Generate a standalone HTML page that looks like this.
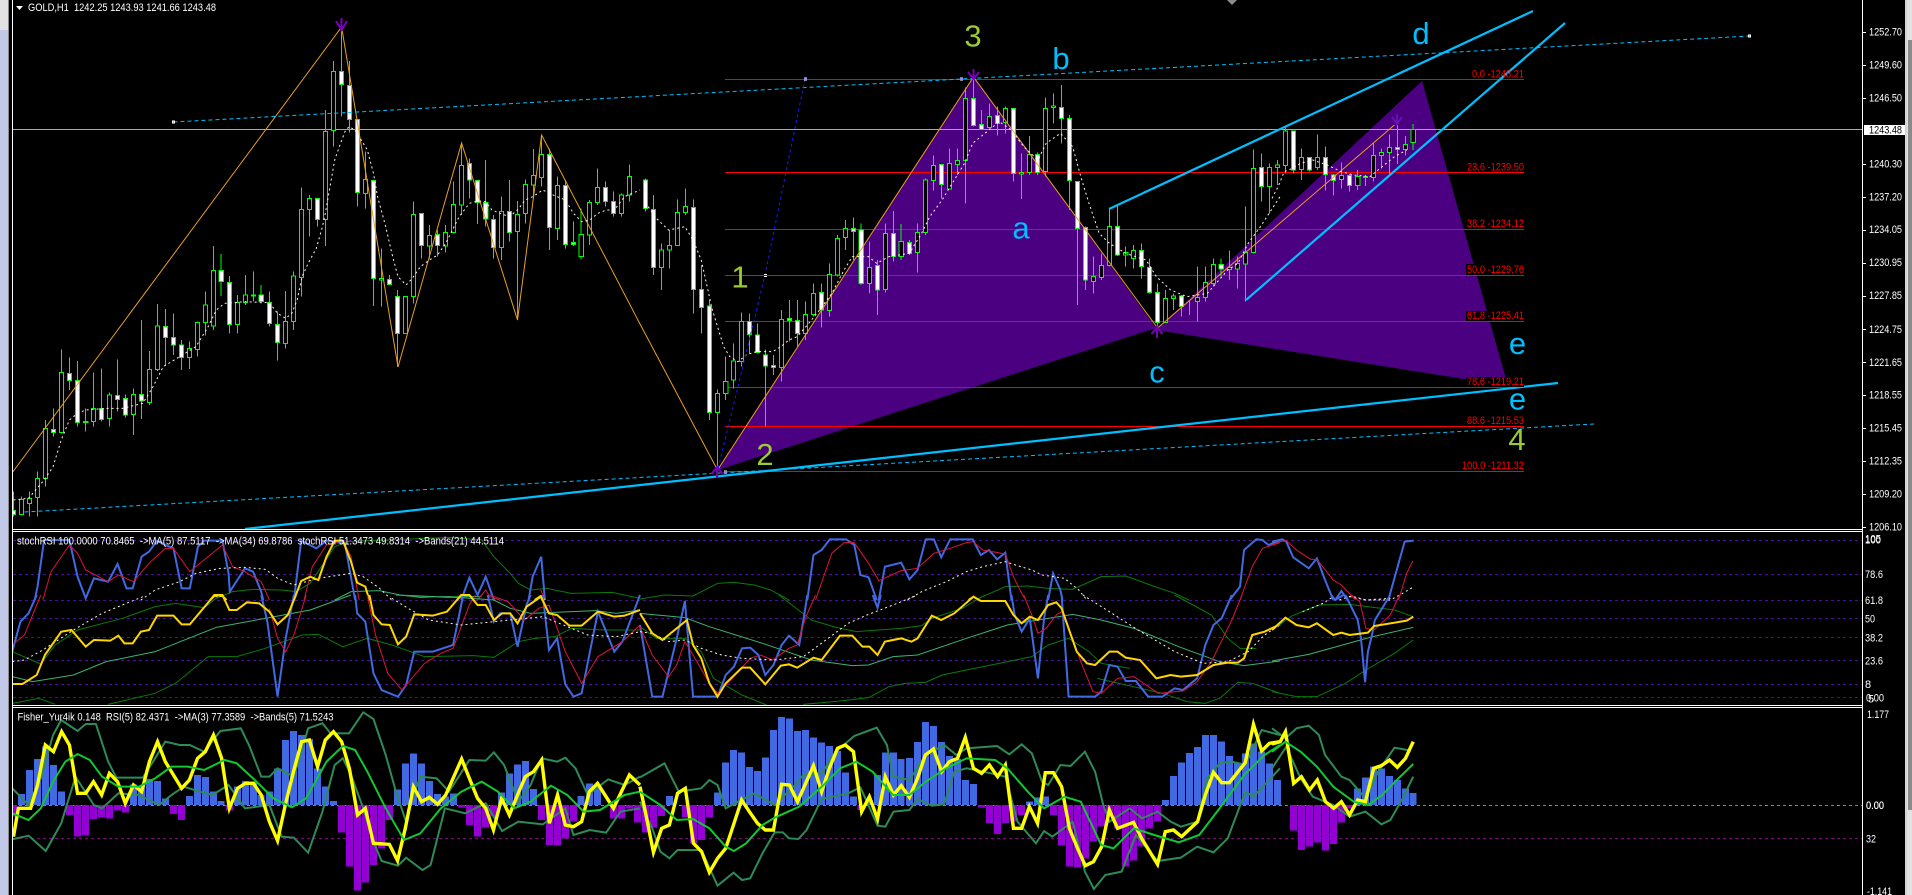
<!DOCTYPE html>
<html><head><meta charset="utf-8"><title>GOLD,H1</title>
<style>
html,body{margin:0;padding:0;background:#000;width:1912px;height:895px;overflow:hidden}
svg{display:block}
path{vector-effect:non-scaling-stroke}
text{font-family:"Liberation Sans",Arial,sans-serif;font-size:11px;fill:#fff}
.w{stroke:#0f0;stroke-width:1;shape-rendering:crispEdges}
.u{stroke:#0f0;stroke-width:1;fill:#000;shape-rendering:crispEdges}
.d{stroke:#0f0;stroke-width:1;fill:#fff;shape-rendering:crispEdges}
.m{stroke:#fff8e8;stroke-width:1;stroke-dasharray:2 3}
.o{stroke:#e8a020;stroke-width:1}
.bl{stroke:#4169e1;stroke-width:2}
.rd{stroke:#dc143c;stroke-width:1}
.dg{stroke:#0a7a0a;stroke-width:1}
.mg{stroke:#3cb371;stroke-width:1}
.yw{stroke:#ffd700;stroke-width:2}
.ub{stroke:#4169e1;stroke-width:7;shape-rendering:crispEdges}
.db{stroke:#9400d3;stroke-width:7;shape-rendering:crispEdges}
.sg{stroke:#2e8b57;stroke-width:2}
.yy{stroke:#ffff00;stroke-width:3.4}
.lg{stroke:#10c830;stroke-width:2}
text.big{font-size:31px}
text.cy{fill:#00bfff}
text.yg{fill:#9acd32}
text.rt{fill:#f00}
</style></head><body>
<svg width="1912" height="895" viewBox="0 0 1912 895" fill="none" xmlns="http://www.w3.org/2000/svg">
<rect width="1912" height="895" fill="#000"/>

<!-- purple harmonic polygons -->
<path fill="#4b0082" d="M718 470L973.5 76L1156 328Z"/>
<path fill="#4b0082" d="M1156 330L1422 81L1508 386Z"/>

<!-- fib lines -->
<g stroke="#f00" stroke-width="1" shape-rendering="crispEdges">
<path d="M725 79.5H1524M725 172.5H1524M725 229.5H1524M725 275.5H1524M725 321.5H1524M725 387.5H1524M725 426.5H1524M725 471.5H1524"/>
</g>

<!-- current price line -->
<path d="M12 129.5H1863" stroke="#a8a8a8" stroke-width="1" shape-rendering="crispEdges"/>

<!-- candles crop 1 -->
<g transform="scale(.40816 .33333)">
<path class="w" d="M503 875V1007M523 738V990M542 762V888M562 828V1000M582 885V1000M601 825V915M621 815V905M640 855V910M660 875V980M699 873V1045M719 815V990M739 562V890M758 585V710M778 595V680M797 330V738M817 183V440M837 70V350M856 183V398M876 358V620M895 455V625M915 540V918M935 745V920M954 825V855M974 870V1100M1013 605V910M1033 640V775M1052 675V775M1072 690V770M1091 675V757M1111 545V700M1131 430V645M1150 475V595M1170 540V672M1190 480V680M1209 645V775M1229 590V780M1248 540V725M1268 603V960M1287 538V670M1307 447V590M1327 405V560M1346 445V750M1366 530V720M1385 540V745M1405 665V738M1424 625V778M1444 600V735M1464 505V615M1483 545V620M1503 575V650M1523 580V650M1542 493V605"/>
<path class="u" d="M518 812h10V978h-10zM596 885h10V908h-10zM714 828h10V965h-10zM734 628h10V832h-10zM753 595h10V628h-10zM792 394h10V658h-10zM812 214h10V391h-10zM890 538h10V580h-10zM988 890h10V1000h-10zM1008 643h10V890h-10zM1047 707h10V738h-10zM1086 697h10V738h-10zM1106 613h10V697h-10zM1126 496h10V615h-10zM1224 634h10V742h-10zM1263 643h10V695h-10zM1282 553h10V640h-10zM1302 526h10V555h-10zM1322 463h10V532h-10zM1361 557h10V685h-10zM1419 703h10V770h-10zM1439 607h10V705h-10zM1459 562h10V607h-10zM1518 585h10V640h-10zM1537 529h10V585h-10zM930 835h10V840h-10zM616 885h10V888h-10z"/>
<path class="d" d="M537 812h10V845h-10zM557 848h10V973h-10zM635 885h10V905h-10zM773 595h10V658h-10zM832 214h10V253h-10zM851 257h10V358h-10zM871 358h10V577h-10zM910 541h10V835h-10zM949 838h10V853h-10zM969 890h10V1000h-10zM1028 640h10V737h-10zM1067 703h10V737h-10zM1145 490h10V540h-10zM1165 542h10V607h-10zM1185 607h10V657h-10zM1204 658h10V742h-10zM1243 635h10V697h-10zM1341 463h10V682h-10zM1380 557h10V733h-10zM1400 727h10V733h-10zM1478 562h10V605h-10zM1498 604h10V640h-10z"/>
</g>
<!-- candles crop 4 -->
<g transform="translate(0 300) scale(.40816 .33333)">
<path class="w" d="M33 575V650M53 590V645M72 575V650M92 515V650M111 360V560M131 325V410M151 148V400M170 172V270M190 183V380M210 325V395M229 217V380M249 205V365M268 278V380M288 178V335M307 283V352M327 265V405M347 60V357M366 153V315M386 12V213M405 27V197M425 40V165M445 120V210M464 125V207M484 65V170M680 35V182"/>
<path class="u" d="M48 598h10V643h-10zM67 595h10V610h-10zM87 535h10V592h-10zM106 385h10V535h-10zM146 217h10V397h-10zM224 325h10V365h-10zM263 285h10V355h-10zM322 283h10V343h-10zM361 208h10V307h-10zM381 78h10V208h-10zM459 145h10V172h-10zM479 67h10V148h-10zM498 15h10V67h-10zM577 8h10V73h-10zM694 65h10V130h-10zM205 364h10V368h-10z"/>
<path class="d" d="M28 632h10V643h-10zM126 388h10V397h-10zM165 221h10V241h-10zM185 241h10V367h-10zM244 325h10V358h-10zM283 287h10V298h-10zM302 295h10V345h-10zM342 283h10V303h-10zM400 79h10V112h-10zM420 112h10V135h-10zM440 135h10V172h-10zM655 8h10V70h-10zM675 73h10V128h-10z"/>
</g>
<!-- candles crop 2 -->
<g transform="translate(640 0) scale(.40816 .33333)">
<path class="w" d="M13 535V635M33 585V825M53 730V870M72 690V805M92 598V738M111 565V645M131 598V940M151 795V1000M170 900V1260M190 1168V1410M210 1070V1200M229 1030V1165M249 938V1100M268 940V1060M288 970V1060M307 1048V1280M327 1065V1125M347 930V1145M366 900V1025M386 900V1040M405 905V1020M425 850V950M445 850V982M464 790V950M484 705V830M503 660V750M523 652V780M542 670V855M562 725V880M582 780V945M601 670V878M621 633V785M640 672V780M660 720V765M680 670V818M699 535V705M719 467V572M739 493V595M758 445V568M778 445V525M797 262V610M817 232V380M837 330V388M856 310V385M876 320V407M895 320V400M915 325V545M935 460V597M954 408V525M974 457V525M993 292V530M1013 280V370M1033 255V430M1052 345V630M1072 545V915M1091 680V870M1111 770V880M1131 760V840M1150 625V800M1170 615V768M1190 740V800M1209 735V805M1229 730V835M1248 775V880M1268 850V985M1287 870V955M1307 880V930M1327 885V950M1346 900V945M1366 800V965M1385 800V905M1405 775V860M1424 775V830M1444 752V840M1464 770V865M1483 620V905M1503 448V760M1523 460V605M1542 490V640"/>
<path class="u" d="M48 750h10V803h-10zM67 737h10V750h-10zM87 637h10V737h-10zM106 620h10V638h-10zM185 1180h10V1237h-10zM205 1145h10V1180h-10zM224 1083h10V1140h-10zM244 965h10V1085h-10zM342 958h10V1103h-10zM400 943h10V1000h-10zM420 880h10V943h-10zM459 823h10V932h-10zM479 715h10V825h-10zM498 685h10V713h-10zM557 803h10V850h-10zM596 700h10V868h-10zM635 725h10V770h-10zM675 697h10V757h-10zM694 540h10V697h-10zM714 497h10V542h-10zM753 490h10V567h-10zM773 482h10V493h-10zM792 295h10V482h-10zM851 349h10V382h-10zM890 325h10V368h-10zM930 518h10V522h-10zM949 463h10V518h-10zM988 325h10V515h-10zM1008 318h10V323h-10zM1106 830h10V845h-10zM1126 797h10V832h-10zM1145 680h10V797h-10zM1185 757h10V765h-10zM1204 752h10V775h-10zM1282 895h10V968h-10zM1302 888h10V895h-10zM1361 893h10V905h-10zM1380 847h10V893h-10zM1400 793h10V850h-10zM1439 803h10V808h-10zM1459 790h10V807h-10zM1478 757h10V792h-10zM1498 505h10V757h-10zM1537 502h10V560h-10z"/>
<path class="d" d="M8 540h10V625h-10zM28 628h10V803h-10zM126 622h10V868h-10zM146 868h10V922h-10zM165 918h10V1237h-10zM263 965h10V1003h-10zM283 1005h10V1057h-10zM302 1065h10V1098h-10zM322 1097h10V1102h-10zM361 955h10V962h-10zM381 962h10V1000h-10zM440 878h10V930h-10zM518 685h10V695h-10zM537 690h10V850h-10zM577 797h10V870h-10zM616 700h10V770h-10zM655 727h10V760h-10zM734 493h10V553h-10zM812 295h10V377h-10zM832 373h10V388h-10zM871 347h10V370h-10zM910 325h10V520h-10zM969 463h10V518h-10zM1028 322h10V355h-10zM1047 355h10V541h-10zM1067 545h10V685h-10zM1086 683h10V840h-10zM1165 680h10V765h-10zM1224 752h10V800h-10zM1243 802h10V877h-10zM1263 878h10V968h-10zM1322 888h10V920h-10zM1419 793h10V807h-10zM1518 502h10V560h-10z"/>
</g>
<!-- candles crop 3 -->
<g transform="translate(1272 0) scale(.40816 .33333)">
<path class="w" d="M13 480V555M33 378V520M53 393V520M72 445V540M92 472V515M111 403V510M131 440V572M151 522V587M170 487V565M190 522V575M210 510V570M229 525V558M249 430V545M268 445V505M288 403V525M307 355V492M327 408V467M346 372V450"/>
<path class="u" d="M8 495h10V503h-10zM28 393h10V497h-10zM67 472h10V509h-10zM106 472h10V503h-10zM165 527h10V538h-10zM205 530h10V557h-10zM224 529h10V532h-10zM244 467h10V532h-10zM263 457h10V467h-10zM283 443h10V457h-10zM322 433h10V449h-10zM341 388h10V428h-10z"/>
<path class="d" d="M48 393h10V510h-10zM87 472h10V510h-10zM126 472h10V523h-10zM146 525h10V541h-10zM185 527h10V557h-10zM302 442h10V449h-10z"/>
</g>

<!-- orange zigzag -->
<path class="o" d="M12 473L341.6 27L398 367L461.6 143L517.5 320L541.6 135L640 324L717.5 470L973.5 77L1157.5 328L1394.4 125"/>

<!-- white dotted MA -->
<g transform="scale(.40816 .33333)"><path class="m" d="M728 900 740 830 755 790 775 745 790 680 797 640 810 550 820 480 830 445 845 395 855 380 870 390 885 420 900 450 915 520 925 590 945 680 960 760 975 830 995 855 1010 835 1030 800 1052 780 1072 765 1092 730 1125 650 1150 610 1170 603 1190 605 1205 630 1225 640 1248 650 1268 630 1287 600 1305 590 1330 570 1345 580 1365 590 1385 600 1405 640 1425 665 1445 660 1465 640 1485 630 1505 630 1530 590 1568 570"/></g>
<g transform="translate(0 300) scale(.40816 .33333)"><path class="m" d="M33 600 70 595 108 540 130 500 150 420 170 360 190 340 210 330 260 325 300 325 350 310 375 260 400 200 440 170 480 140 510 80 530 30 550 10 600 5 660 8 680 40 700 55 715 40 728 0"/></g>
<g transform="translate(640 0) scale(.40816 .33333)"><path class="m" d="M20 620 40 655 70 690 110 680 130 720 150 780 170 890 175 920 190 980 205 1040 220 1070 240 1085 260 1065 285 1055 325 1055 345 1040 365 1020 385 1010 410 975 440 930 470 880 500 810 520 770 560 770 580 790 610 770 660 760 690 700 710 650 740 600 770 540 795 490 815 430 850 395 880 365 910 390 940 440 975 480 995 430 1030 400 1060 440 1080 530 1100 610 1125 700 1150 730 1190 760 1240 780 1265 830 1300 870 1340 890 1390 880 1440 810 1465 790 1490 730 1520 680 1568 590"/></g>
<g transform="translate(1272 0) scale(.40816 .33333)"><path class="m" d="M0 595 15 560 30 515 50 505 70 490 100 480 135 495 170 515 200 525 240 530 270 500 300 470 330 450"/></g>

<!-- cyan lines -->
<g stroke="#00bfff" stroke-width="2.2">
<path d="M245 529L1558 383"/>
<path d="M1109 209L1533 11"/>
<path d="M1246 300L1565 23"/>
</g>
<g stroke="#00bfff" stroke-width="1" stroke-dasharray="4 3">
<path d="M173.5 122L1749.6 36"/>
<path d="M24.5 512L1594 424"/>
</g>
<path d="M805 79L765 275L717 473" stroke="#1a1af0" stroke-width="1" stroke-dasharray="3 3"/>

<!-- endpoints -->
<g fill="#fff"><rect x="172" y="120.500" width="3" height="3"/><rect x="1748" y="34.500" width="3" height="3"/><rect x="804" y="77.500" width="3" height="3"/><rect x="764" y="274" width="3" height="3"/><rect x="960" y="77.500" width="3" height="3"/><rect x="724" y="470.500" width="3" height="3"/></g>
<g fill="#00bfff"><rect x="173" y="121.500" width="1" height="1"/><rect x="1749" y="35.500" width="1" height="1"/></g>
<g fill="#1a1af0"><rect x="804" y="78.500" width="3" height="1"/><rect x="764" y="275" width="3" height="1"/><rect x="960" y="78.500" width="3" height="1"/><rect x="724" y="471.500" width="3" height="1"/></g>

<!-- arrows -->
<g stroke="#7a00b8" stroke-width="2">
<path d="M341.500 18V31M336 21L341.500 30L347 21"/>
<path d="M973.500 69V80M968 72L973.500 79L979 72"/>
<path d="M1157 338V326M1151.500 334L1157 327L1162.500 334"/>
<path d="M717 478V466M711.500 474L717 467L722.500 474"/>
<path stroke="#6a10b0" d="M1397 114V125M1392 117L1397 124L1402 117"/>
</g>

<!-- big letters -->
<g text-anchor="middle">
<text class="big yg" x="973" y="46.500">3</text>
<text class="big cy" x="1061" y="69">b</text>
<text class="big cy" x="1021" y="238.500">a</text>
<text class="big yg" x="740" y="287.500">1</text>
<text class="big cy" x="1421" y="44">d</text>
<text class="big yg" x="765" y="465">2</text>
<text class="big cy" x="1157" y="382.500">c</text>
<text class="big cy" x="1517.500" y="354">e</text>
<text class="big cy" x="1517.500" y="409.500">e</text>
<text class="big yg" x="1517" y="450">4</text>
</g>

<!-- fib label backgrounds + labels -->
<g fill="#000"><rect x="1466" y="264" width="58" height="11"/><rect x="1466" y="311" width="58" height="10"/><rect x="1466" y="377" width="58" height="10"/></g>
<g>
<text class="rt" x="1472" y="77.500" textLength="52" lengthAdjust="spacingAndGlyphs">0.0 -1248.21</text>
<text class="rt" x="1467" y="170.500" textLength="57" lengthAdjust="spacingAndGlyphs">23.6 -1239.50</text>
<text class="rt" x="1467" y="227" textLength="57" lengthAdjust="spacingAndGlyphs">38.2 -1234.12</text>
<text class="rt" x="1467" y="273" textLength="57" lengthAdjust="spacingAndGlyphs">50.0 -1229.76</text>
<text class="rt" x="1467" y="319" textLength="57" lengthAdjust="spacingAndGlyphs">61.8 -1225.41</text>
<text class="rt" x="1467" y="385" textLength="57" lengthAdjust="spacingAndGlyphs">78.6 -1219.21</text>
<text class="rt" x="1467" y="424" textLength="57" lengthAdjust="spacingAndGlyphs">88.6 -1215.53</text>
<text class="rt" x="1462" y="469" textLength="62" lengthAdjust="spacingAndGlyphs">100.0 -1211.32</text>
</g>

<!-- panel 2 -->
<g stroke="#4b0aa0" stroke-width="1" stroke-dasharray="3 3" shape-rendering="crispEdges">
<path d="M13 540.500H1863M13 574.500H1863M13 600.500H1863M13 618.500H1863M13 637.500H1863M13 660.500H1863M13 684.500H1863M13 697.500H1863"/>
</g>
<g transform="translate(0 300) scale(.40816 .33333)">
<path class="dg" d="M530 895 570 875 620 868 690 870 725 875 760 850 820 740 850 725 1100 712 1180 720 1210 770 1250 820 1270 850 1300 870 1340 865 1400 880 1500 877 1568 895"/>
<path class="mg" d="M820 900 860 875 930 872 980 885 1030 892 1090 890 1180 890"/>
<path class="bl" d="M85 900 92 860 108 720 170 720 190 830 210 895 230 835 265 845 288 792 310 865 325 865 347 770 365 755 385 722 405 735 425 745 445 865 465 865 485 740 500 722 545 722 560 820 563 875 600 805 620 815 640 875 645 900M720 900 738 722 775 745 800 722 845 730 870 900M1130 900 1150 833 1170 885 1190 830 1210 900M1295 900 1305 830 1326 770 1335 900"/>
<path class="rd" d="M105 900 125 815 170 735 190 760 210 810 265 845 290 825 327 845 365 790 405 745 425 745 465 815 545 735 570 800 600 815 640 845 660 900M745 900 765 800 800 735 840 722 860 770 880 900M1170 900 1190 870 1200 890 1225 900M1325 870 1335 900"/>
<path class="m" d="M345 900 380 870 440 845 480 820 540 805 600 802 650 808 680 835 720 855 780 835 860 820 890 830 930 865 960 900"/>
<path class="yw" d="M515 900 525 888 545 888 555 900M720 900 738 843 760 830 780 840 800 770 820 722 840 722 860 785 875 848 895 860 905 900M1120 900 1130 885 1150 885 1160 900M1310 900 1325 888 1335 900"/>
</g>
<g transform="translate(640 300) scale(.40816 .33333)">
<path class="dg" d="M0 897 60 885 130 888 190 850 230 847 280 855 320 870 365 900"/>
<path class="dg" d="M830 895 895 860 950 858 1000 865 1060 868 1130 830 1190 828 1250 855 1310 880 1345 900"/>
<path class="bl" d="M410 900 425 765 445 750 465 718 505 718 525 735 540 825 560 832 580 900M585 900 600 800 640 788 660 838 680 810 700 718 720 718 738 772 760 718 815 718 835 765 855 750 875 778 895 758 910 900M1000 900 1012 820 1030 870 1035 900M1445 900 1470 860 1480 750 1510 718 1525 720 1540 735 1568 720"/>
<path class="rd" d="M430 900 470 760 500 728 525 728 560 790 585 842 640 812 680 805 720 760 760 745 800 728 815 725 840 750 895 762 915 830 935 880 945 900M1470 900 1500 800 1525 745 1568 728"/>
<path class="m" d="M655 900 690 875 750 845 800 815 840 800 895 785 920 795 960 810 985 825 1040 835 1075 870 1095 900"/>
<path class="yw" d="M805 900 817 890 830 900"/>
</g>
<g transform="translate(1272 300) scale(.40816 .33333)">
<path class="bl" d="M0 725 25 718 35 725 52 772 90 805 110 775 130 840 150 900M155 900 170 873 185 900M285 900 325 725 347 722"/>
<path class="rd" d="M0 735 20 725 35 722 60 750 95 778 110 778 150 840 170 855 205 900M310 900 330 820 345 783"/>
<path class="m" d="M165 900 195 888 230 900 290 900 320 880 345 862"/>
</g>
<g transform="translate(0 595) scale(.40816 .33333)">
<path class="dg" d="M30 170 100 207 135 150 190 105 300 70 380 35 430 25 500 38 540 0M970 0 1100 8 1140 0"/>
<path class="dg" d="M30 325 95 310 135 328M265 328 380 295 430 265 510 185 580 185 650 160 740 120 780 118 840 155 900 130 960 150 1040 185 1160 182 1210 187 1270 140 1310 130 1360 125 1400 100 1480 105 1568 105"/>
<path class="mg" d="M30 245 80 260 180 240 260 200 380 170 530 97 650 70 760 45 860 0M970 0 1130 8 1210 15 1250 40 1300 55 1460 47 1510 55 1568 45"/>
<path class="bl" d="M30 170 50 80 70 55 90 0M640 0 655 80 680 305 700 130 720 0M870 0 875 55 895 80 915 235 935 285 975 305 995 270 1015 170 1060 170 1110 150 1135 0M1195 0 1210 80 1225 55 1250 55 1268 155 1290 30 1300 0M1330 0 1345 165 1365 130 1385 268 1405 305 1425 295 1465 50 1505 170 1525 140 1568 0"/>
<path class="rd" d="M30 150 60 120 100 0M660 40 680 130 700 170 720 120 750 0M900 0 920 120 950 235 985 285 1040 205 1080 175 1110 160 1150 30 1165 0M1200 0 1245 20 1285 75 1320 40 1345 30 1385 170 1425 265 1465 185 1525 140 1568 90"/>
<path class="m" d="M30 200 60 195 105 165 180 105 250 55 350 5M960 10 1000 40 1050 75 1130 90 1250 75 1330 65 1400 100 1440 120 1510 125 1568 110"/>
<path class="yw" d="M30 267 55 267 90 240 110 180 150 110 175 105 210 155 230 135 270 137 290 122 305 145 325 145 345 110 365 105 385 62 425 62 445 88 465 88 505 30 525 0 545 0 562 45 580 45 605 22 635 25 660 50 680 88 705 60 725 0M905 0 915 60 935 88 955 90 975 148 995 125 1015 58 1060 62 1095 50 1130 0 1150 0 1170 30 1190 30 1210 75 1230 55 1250 55 1268 85 1290 35 1325 5 1345 55 1365 60 1395 92 1425 92 1465 50 1505 65 1530 62 1568 45"/>
</g>
<g transform="translate(640 595) scale(.40816 .33333)">
<path class="dg" d="M340 0 420 75 480 97 530 110 640 100 690 92 715 70 790 40 845 0M0 95 40 130 110 130 150 170 180 250 250 300 310 330M400 328 490 318 560 308 610 275 650 265 700 262 740 240 800 225 880 205 960 185 1000 150 1050 130 1100 170 1130 205 1200 220M1310 0 1400 60 1440 130 1470 160 1510 160M1120 250 1280 295 1340 320 1385 325 1420 310 1465 262 1500 265 1568 295"/>
<path class="mg" d="M0 55 110 68 170 95 300 145 420 195 520 212 560 210 620 185 680 180 800 130 900 90 1000 70 1060 58 1130 75 1210 100 1320 155 1420 200 1480 212 1568 198"/>
<path class="bl" d="M0 90 30 305 55 305 90 130 110 18 130 305 190 305 210 240 230 215 250 160 270 158 290 180 307 240 327 210 347 150 365 122 390 150 405 40 410 0M570 0 582 38 590 0M910 0 918 60 935 110 955 70 975 250 990 70 1000 0M1033 0 1050 305 1115 305 1130 290 1150 210 1170 215 1190 258 1215 258 1245 305 1280 305 1310 280 1330 285 1365 250 1385 150 1405 90 1425 70 1450 0"/>
<path class="rd" d="M0 95 30 180 70 245 90 210 110 140 130 180 170 265 190 295 230 245 270 190 295 180 325 195 365 160 385 150 405 70 430 0M940 0 960 60 975 115 995 100 1020 60 1033 50 1060 130 1080 200 1110 290 1130 295 1170 250 1210 245 1270 295 1330 288 1365 260 1400 200 1450 75 1475 0"/>
<path class="m" d="M0 110 30 115 70 140 110 135 150 160 200 180 250 190 330 195 400 185 450 140 510 85 560 58 620 30 680 0M1085 0 1150 50 1220 105 1310 170 1380 205 1440 200 1490 170 1530 120 1568 90"/>
<path class="yw" d="M0 55 30 115 55 135 90 100 115 75 130 150 150 190 170 265 190 305 210 265 250 218 270 218 307 268 345 212 365 208 385 218 425 188 445 195 490 122 520 122 545 155 562 155 582 180 600 140 640 130 665 140 680 130 715 62 738 75 770 55 817 5 835 18 895 18 915 60 935 85 955 65 975 75 1000 30 1020 22 1033 40 1050 100 1070 170 1095 205 1115 210 1150 170 1170 170 1190 188 1225 195 1265 250 1300 240 1325 245 1365 240 1405 210 1440 203 1465 203 1480 190 1500 120 1530 110 1568 88"/>
</g>
<g transform="translate(1272 595) scale(.40816 .33333)">
<path class="dg" d="M0 105 50 62 115 30 190 28 300 45 346 65M0 290 60 305 110 305 180 265 230 225 300 175 346 135"/>
<path class="mg" d="M0 198 90 178 240 127 346 97"/>
<path class="bl" d="M145 0 155 15 175 0M180 0 210 75 218 130 228 262 235 170 245 120 252 75 290 0"/>
<path class="rd" d="M195 0 215 20 230 100 250 105 290 60 312 0"/>
<path class="m" d="M75 50 125 25 150 5M190 5 230 15 290 10"/>
<path class="yw" d="M0 105 33 68 60 90 90 97 110 85 150 120 170 113 190 120 235 113 250 93 330 77 346 65"/>
</g>

<!-- panel 3 -->
<path d="M13 805.500H1863" stroke="#778899" stroke-width="1" stroke-dasharray="3 3" shape-rendering="crispEdges"/>
<path d="M13 838.500H1863" stroke="#800080" stroke-width="1" stroke-dasharray="3 3" shape-rendering="crispEdges"/>
<g transform="translate(0 595) scale(.40816 .33333)">
<path class="ub" d="M53 630V597M72 630V525M92 630V492M111 630V455M131 630V510M151 630V590M327 630V568M347 630V575M366 630V552M386 630V558M405 630V610M464 630V603M484 630V540M503 630V546M523 630V590M542 630V618M582 630V575M601 630V558M621 630V560M640 630V600M660 630V590M680 630V520M699 630V435M719 630V408M739 630V420M758 630V432M778 630V520M797 630V575M817 630V618M974 630V583M993 630V505M1013 630V475M1033 630V505M1052 630V558M1072 630V597M1091 630V605M1111 630V595M1229 630V592M1248 630V535M1268 630V508M1287 630V498M1307 630V582M1424 630V603M1444 630V565M1464 630V570"/>
<path class="db" d="M33 630V665M170 630V660M190 630V725M210 630V722M229 630V672M249 630V668M268 630V671M288 630V647M307 630V653M425 630V657M445 630V675M562 630V647M837 630V713M856 630V815M876 630V887M895 630V863M915 630V810M935 630V760M954 630V675M1131 630V638M1150 630V690M1170 630V725M1190 630V698M1209 630V665M1327 630V675M1346 630V750M1366 630V752M1385 630V730M1405 630V680M1503 630V670M1523 630V670M1542 630V640M1562 630V683"/>
<path class="sg" d="M30 580 70 630 100 550 130 420 150 375 190 408 210 387 235 387 265 500 285 548 350 548 380 490 405 440 440 450 465 450 500 470 540 408 590 400 610 450 640 545 660 545 680 520 720 545 755 400 790 385 810 415 855 415 890 352 915 372 945 480 970 590 995 680 1010 610 1030 545 1070 550 1100 590 1150 495 1190 497 1210 472 1235 510 1270 620 1300 570 1327 490 1365 500 1385 488 1410 520 1440 600 1490 553 1530 570 1568 545"/>
<path class="sg" d="M30 733 70 722 112 768 150 685 185 545 230 630 250 640 290 595 340 600 390 630 420 600 450 575 490 590 520 600 560 570 600 640 660 630 690 725 720 728 755 773 790 650 820 510 840 490 860 540 890 640 915 740 935 798 975 812 995 788 1035 825 1055 810 1090 640 1140 655 1190 625 1230 708 1270 680 1330 688 1385 640 1405 720 1445 705 1485 713 1520 650 1568 640"/>
<path class="yy" d="M33 725 45 640 75 640 92 570 111 450 131 470 151 410 170 450 190 595 210 595 229 560 249 600 268 535 288 560 307 625 327 570 347 590 366 500 386 440 405 500 445 580 464 555 484 490 503 470 523 420 543 490 562 640 582 580 601 565 621 565 640 600 660 680 680 737 699 630 719 530 739 440 758 435 778 515 797 435 817 410 837 440 856 520 876 660 895 640 915 745 954 748 974 797 993 700 1013 575 1033 620 1052 607 1072 628 1092 600 1131 492 1150 550 1170 610 1190 640 1209 705 1229 610 1248 660 1268 600 1287 545 1307 530 1327 495 1346 685 1366 600 1385 690 1405 695 1425 680 1444 590 1464 565 1503 640 1542 540 1568 570"/>
<path class="lg" d="M30 655 70 675 100 640 130 560 160 500 190 477 220 495 250 545 290 575 340 575 380 550 420 515 460 515 500 525 550 495 580 505 620 550 670 610 715 637 750 610 800 500 840 453 870 465 900 530 945 640 990 735 1030 715 1080 640 1130 590 1180 560 1220 590 1260 640 1300 620 1350 572 1390 600 1430 650 1470 645 1530 600 1568 590"/>
</g>
<g transform="translate(640 595) scale(.40816 .33333)">
<path class="ub" d="M72 630V603M190 630V592M210 630V502M229 630V465M249 630V472M268 630V516M288 630V528M307 630V487M327 630V405M347 630V366M366 630V370M386 630V408M405 630V405M425 630V427M445 630V442M464 630V453M484 630V468M503 630V533M523 630V605M562 630V615M582 630V540M601 630V473M621 630V473M640 630V492M660 630V489M680 630V441M699 630V381M719 630V393M739 630V441M758 630V483M778 630V492M797 630V555M817 630V567M954 630V620M974 630V608M993 630V605M1287 630V615M1307 630V543M1327 630V503M1346 630V474M1366 630V456M1385 630V420M1405 630V420M1425 630V440M1444 630V483M1464 630V503M1483 630V475M1503 630V445M1523 630V470M1542 630V505"/>
<path class="db" d="M13 630V713M33 630V697M53 630V663M111 630V668M131 630V745M151 630V735M170 630V668M542 630V645M837 630V638M856 630V684M876 630V717M895 630V684M915 630V680M935 630V660M1013 630V660M1033 630V752M1052 630V815M1072 630V818M1091 630V790M1111 630V740M1131 630V695M1150 630V665M1170 630V700M1190 630V815M1209 630V797M1229 630V755M1248 630V700M1268 630V680"/>
<path class="sg" d="M0 547 60 505 95 590 150 580 170 555 190 570 210 640 240 620 280 595 330 630 380 570 400 540 445 535 480 470 525 423 580 398 605 450 620 545 660 555 700 480 745 450 775 480 800 460 875 453 905 478 935 448 960 475 985 560 1000 570 1030 510 1055 513 1090 470 1115 530 1135 630 1150 680 1200 640 1230 670 1268 650 1300 680 1325 695 1365 680 1390 550 1420 505 1450 500 1483 510 1523 405 1568 420"/>
<path class="sg" d="M0 620 30 700 50 770 72 790 92 765 150 765 190 872 229 833 250 855 270 850 300 775 330 712 350 712 365 730 388 732 408 705 445 612 510 595 540 577 582 692 601 695 621 650 660 645 680 612 715 632 745 628 770 530 800 520 860 535 895 545 925 680 970 745 990 708 1010 725 1060 680 1090 830 1112 882 1140 840 1180 830 1215 720 1268 798 1325 788 1365 755 1405 772 1440 730 1483 590 1503 605 1568 520"/>
<path class="yy" d="M0 575 13 650 33 772 53 700 72 690 92 595 111 580 131 745 151 770 170 832 190 790 210 760 229 690 249 615 268 650 288 685 307 705 327 705 347 568 366 570 386 620 425 512 445 590 464 520 484 460 503 450 523 470 543 650 562 605 582 672 601 545 621 600 640 572 660 607 680 550 699 480 719 462 739 530 758 500 778 490 797 427 817 520 837 535 856 510 876 545 895 510 915 700 935 700 954 635 974 685 993 533 1013 533 1033 575 1052 700 1072 760 1091 812 1111 800 1131 755 1150 645 1170 700 1209 682 1229 730 1268 808 1287 710 1307 705 1327 725 1366 680 1385 600 1405 532 1425 563 1444 563 1483 503 1503 388 1523 468 1542 445 1568 440"/>
<path class="lg" d="M0 590 50 630 90 675 130 672 170 700 210 755 230 768 260 745 300 690 330 668 390 635 450 570 490 520 530 500 570 530 620 600 660 600 700 560 750 520 800 490 870 495 900 520 950 590 990 640 1040 605 1080 620 1130 750 1160 760 1210 700 1260 720 1320 742 1370 720 1420 640 1480 540 1530 480 1568 450"/>
</g>
<g transform="translate(1272 595) scale(.40816 .33333)">
<path class="ub" d="M13 630V555M210 630V580M229 630V548M249 630V515M268 630V521M288 630V543M307 630V555M327 630V580M346 630V594"/>
<path class="db" d="M53 630V707M72 630V765M92 630V755M111 630V743M131 630V767M151 630V747M170 630V683M190 630V640"/>
<path class="sg" d="M0 400 33 430 60 400 90 392 115 420 130 480 170 545 190 555 229 610 260 530 300 458 340 467"/>
<path class="sg" d="M0 520 35 455 70 550 100 605 150 630 190 665 229 650 268 688 290 675 320 610 346 545"/>
<path class="yy" d="M0 447 20 440 33 410 53 565 72 545 92 585 111 555 131 620 151 640 170 620 190 660 210 615 229 620 249 520 268 512 288 495 307 517 327 490 346 440"/>
<path class="lg" d="M0 470 33 440 70 470 110 515 150 575 200 620 235 630 270 600 310 550 346 507"/>
</g>

<!-- frame & separators -->
<rect x="0" y="0" width="12" height="895" fill="#000"/>
<rect x="0" y="0" width="8" height="30" fill="#e2e2e2"/>
<rect x="0" y="30" width="8" height="865" fill="#c2c8e8"/>
<rect x="8" y="0" width="1" height="895" fill="#8c8c8c"/>
<rect x="12" y="0" width="1" height="895" fill="#fff"/>
<rect x="13" y="529" width="1850" height="1" fill="#fff"/>
<rect x="13" y="531" width="1850" height="1" fill="#fff"/>
<rect x="13" y="705" width="1850" height="1" fill="#fff"/>
<rect x="13" y="707" width="1850" height="1" fill="#fff"/>
<rect x="1862" y="0" width="1" height="895" fill="#fff"/>

<!-- right scrollbar strip -->
<rect x="1905" y="0" width="2" height="895" fill="#d4d4d4"/>
<rect x="1907" y="0" width="5" height="895" fill="#e2e2e2"/>
<rect x="1908" y="40" width="4" height="770" fill="#8a8a8a"/>

<!-- marker top -->
<path d="M1227 0H1237L1232 5Z" fill="#8a8a90"/>

<!-- axis ticks -->
<path stroke="#fff" stroke-width="1" shape-rendering="crispEdges" d="M1863 32.500h3M1863 65.500h3M1863 98.500h3M1863 164.500h3M1863 197.500h3M1863 230.500h3M1863 263.500h3M1863 296.500h3M1863 329.500h3M1863 362.500h3M1863 395.500h3M1863 428.500h3M1863 461.500h3M1863 494.500h3M1863 527.500h3"/>

<!-- header -->
<path d="M16 6H23L19.500 10Z" fill="#fff"/>
<text x="28" y="11" textLength="188" lengthAdjust="spacingAndGlyphs">GOLD,H1&#160; 1242.25 1243.93 1241.66 1243.48</text>
<text x="17" y="544.500" textLength="487" lengthAdjust="spacingAndGlyphs">stochRSI 100.0000 70.8465&#160; -&gt;MA(5) 87.5117&#160; -&gt;MA(34) 69.8786&#160; stochRSI 51.3473 49.8314&#160; -&gt;Bands(21) 44.5114</text>
<text x="17.500" y="720.500" textLength="316" lengthAdjust="spacingAndGlyphs">Fisher_Yur4ik 0.148&#160; RSI(5) 82.4371&#160; -&gt;MA(3) 77.3589&#160; -&gt;Bands(5) 71.5243</text>

<!-- price axis labels -->
<g>
<text x="1869" y="35.500" textLength="33" lengthAdjust="spacingAndGlyphs">1252.70</text>
<text x="1869" y="68.500" textLength="33" lengthAdjust="spacingAndGlyphs">1249.60</text>
<text x="1869" y="101.500" textLength="33" lengthAdjust="spacingAndGlyphs">1246.50</text>
<text x="1869" y="167.500" textLength="33" lengthAdjust="spacingAndGlyphs">1240.30</text>
<text x="1869" y="200.500" textLength="33" lengthAdjust="spacingAndGlyphs">1237.20</text>
<text x="1869" y="233" textLength="33" lengthAdjust="spacingAndGlyphs">1234.05</text>
<text x="1869" y="266" textLength="33" lengthAdjust="spacingAndGlyphs">1230.95</text>
<text x="1869" y="299" textLength="33" lengthAdjust="spacingAndGlyphs">1227.85</text>
<text x="1869" y="333" textLength="33" lengthAdjust="spacingAndGlyphs">1224.75</text>
<text x="1869" y="366" textLength="33" lengthAdjust="spacingAndGlyphs">1221.65</text>
<text x="1869" y="398.500" textLength="33" lengthAdjust="spacingAndGlyphs">1218.55</text>
<text x="1869" y="431.500" textLength="33" lengthAdjust="spacingAndGlyphs">1215.45</text>
<text x="1869" y="464.500" textLength="33" lengthAdjust="spacingAndGlyphs">1212.35</text>
<text x="1869" y="497.500" textLength="33" lengthAdjust="spacingAndGlyphs">1209.20</text>
<text x="1869" y="530.500" textLength="33" lengthAdjust="spacingAndGlyphs">1206.10</text>
</g>
<rect x="1864" y="125" width="41" height="10" fill="#fff"/>
<text x="1869" y="133.500" textLength="33" lengthAdjust="spacingAndGlyphs" style="fill:#000">1243.48</text>

<!-- panel axis labels -->
<g>
<text x="1865" y="542.500" textLength="16" lengthAdjust="spacingAndGlyphs">105</text>
<text x="1865" y="543.500" textLength="16" lengthAdjust="spacingAndGlyphs">100</text>
<text x="1865" y="578" textLength="18" lengthAdjust="spacingAndGlyphs">78.6</text>
<text x="1865" y="604" textLength="18" lengthAdjust="spacingAndGlyphs">61.8</text>
<text x="1865" y="622.500" textLength="10" lengthAdjust="spacingAndGlyphs">50</text>
<text x="1865" y="641.500" textLength="18" lengthAdjust="spacingAndGlyphs">38.2</text>
<text x="1865" y="664.500" textLength="18" lengthAdjust="spacingAndGlyphs">23.6</text>
<text x="1865" y="688">8</text>
<text x="1866" y="701.500" textLength="18" lengthAdjust="spacingAndGlyphs">0.00</text>
<text x="1868" y="702.500">5</text>
<text x="1867" y="718" textLength="22" lengthAdjust="spacingAndGlyphs">1.177</text>
<text x="1866" y="809" textLength="18" lengthAdjust="spacingAndGlyphs">0.00</text>
<text x="1866" y="809" textLength="18" lengthAdjust="spacingAndGlyphs">0.00</text>
<text x="1866" y="842.500" textLength="10" lengthAdjust="spacingAndGlyphs">32</text>
<text x="1867" y="895" textLength="25" lengthAdjust="spacingAndGlyphs">-1.141</text>
</g>
</svg>
</body></html>
